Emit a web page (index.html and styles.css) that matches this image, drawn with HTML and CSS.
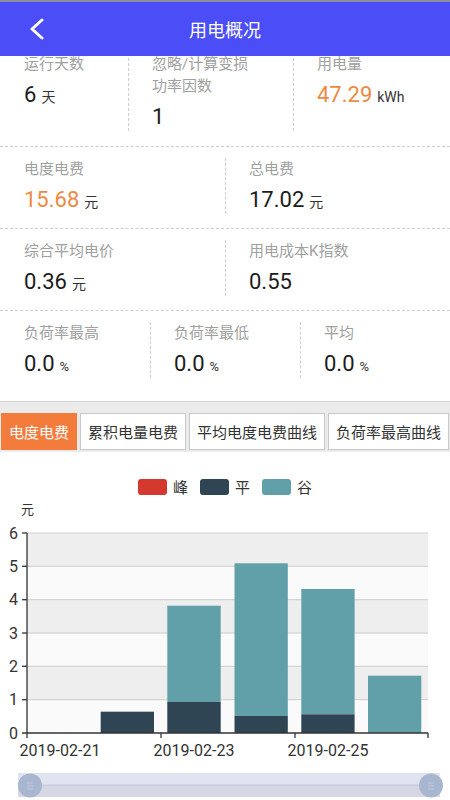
FILE: index.html
```html
<!DOCTYPE html>
<html lang="zh">
<head>
    <meta charset="utf-8">
    <meta name="viewport" content="width=device-width, initial-scale=1">
    <title>用电概况</title>
    <link rel="stylesheet" href="styles.css">
</head>
<body>
<header class="topbar">
    <a class="back" href="#">
        <svg width="16" height="22" viewBox="0 0 16 22"><polyline points="13,2 3,11 13,20" fill="none" stroke="#fff" stroke-width="3" stroke-linecap="round" stroke-linejoin="round"/></svg>
    </a>
    <h1 class="title">用电概况</h1>
    <span></span>
</header>

<main class="page">
    <section class="stats stats-first">
        <div class="stat">
            <div class="stat-label">运行天数</div>
            <div class="stat-value"><span class="num">6</span><span class="unit">天</span></div>
        </div>
        <div class="stat">
            <div class="stat-label two-line">忽略/计算变损<br>功率因数</div>
            <div class="stat-value"><span class="num">1</span></div>
        </div>
        <div class="stat">
            <div class="stat-label">用电量</div>
            <div class="stat-value accent"><span class="num">47.29</span><span class="unit">kWh</span></div>
        </div>
    </section>

    <section class="stats stats-half">
        <div class="stat">
            <div class="stat-label">电度电费</div>
            <div class="stat-value accent"><span class="num">15.68</span><span class="unit">元</span></div>
        </div>
        <div class="stat">
            <div class="stat-label">总电费</div>
            <div class="stat-value"><span class="num">17.02</span><span class="unit">元</span></div>
        </div>
    </section>

    <section class="stats stats-half">
        <div class="stat">
            <div class="stat-label">综合平均电价</div>
            <div class="stat-value"><span class="num">0.36</span><span class="unit">元</span></div>
        </div>
        <div class="stat">
            <div class="stat-label">用电成本K指数</div>
            <div class="stat-value"><span class="num">0.55</span></div>
        </div>
    </section>

    <section class="stats stats-third">
        <div class="stat">
            <div class="stat-label">负荷率最高</div>
            <div class="stat-value"><span class="num">0.0</span><span class="unit pct">%</span></div>
        </div>
        <div class="stat">
            <div class="stat-label">负荷率最低</div>
            <div class="stat-value"><span class="num">0.0</span><span class="unit pct">%</span></div>
        </div>
        <div class="stat">
            <div class="stat-label">平均</div>
            <div class="stat-value"><span class="num">0.0</span><span class="unit pct">%</span></div>
        </div>
    </section>

    <nav class="tabs">
        <div class="tab active">电度电费</div>
        <div class="tab">累积电量电费</div>
        <div class="tab">平均电度电费曲线</div>
        <div class="tab">负荷率最高曲线</div>
    </nav>

    <div class="chart">
        <svg width="450" height="348" viewBox="0 0 450 348">
            <!-- legend -->
            <rect x="138" y="27" width="29" height="16" rx="3" fill="#d4382f"/>
            <text x="173" y="41" class="legend-text">峰</text>
            <rect x="200" y="27" width="29" height="16" rx="3" fill="#2f4554"/>
            <text x="235" y="41" class="legend-text">平</text>
            <rect x="262" y="27" width="29" height="16" rx="3" fill="#61a0a8"/>
            <text x="297" y="41" class="legend-text">谷</text>

            <text x="21" y="62" class="axis-name">元</text>

            <!-- split areas -->
            <rect x="27" y="81" width="401" height="33.3" fill="#eeeeee"/>
            <rect x="27" y="114.3" width="401" height="33.4" fill="#fafafa"/>
            <rect x="27" y="147.7" width="401" height="33.3" fill="#eeeeee"/>
            <rect x="27" y="181" width="401" height="33.3" fill="#fafafa"/>
            <rect x="27" y="214.3" width="401" height="33.4" fill="#eeeeee"/>
            <rect x="27" y="247.7" width="401" height="33.3" fill="#fafafa"/>

            <g stroke="#cccccc" stroke-width="1">
                <line x1="27" y1="81" x2="428" y2="81"/>
                <line x1="27" y1="114.3" x2="428" y2="114.3"/>
                <line x1="27" y1="147.7" x2="428" y2="147.7"/>
                <line x1="27" y1="181" x2="428" y2="181"/>
                <line x1="27" y1="214.3" x2="428" y2="214.3"/>
                <line x1="27" y1="247.7" x2="428" y2="247.7"/>
            </g>

            <!-- bars -->
            <rect x="100.7" y="259.7" width="53.3" height="21.3" fill="#2f4554"/>
            <rect x="167.3" y="153.7" width="53.4" height="96.3" fill="#61a0a8"/>
            <rect x="167.3" y="250" width="53.4" height="31" fill="#2f4554"/>
            <rect x="234.5" y="111.3" width="53.3" height="152.7" fill="#61a0a8"/>
            <rect x="234.5" y="264" width="53.3" height="17" fill="#2f4554"/>
            <rect x="301.3" y="137" width="53.3" height="125.3" fill="#61a0a8"/>
            <rect x="301.3" y="262.3" width="53.3" height="18.7" fill="#2f4554"/>
            <rect x="368" y="223.7" width="53.3" height="57.3" fill="#61a0a8"/>

            <!-- axes -->
            <g stroke="#333" stroke-width="1.3">
                <line x1="27" y1="81" x2="27" y2="281"/>
                <line x1="22" y1="81" x2="27" y2="81"/>
                <line x1="22" y1="114.3" x2="27" y2="114.3"/>
                <line x1="22" y1="147.7" x2="27" y2="147.7"/>
                <line x1="22" y1="181" x2="27" y2="181"/>
                <line x1="22" y1="214.3" x2="27" y2="214.3"/>
                <line x1="22" y1="247.7" x2="27" y2="247.7"/>
                <line x1="22" y1="281" x2="428" y2="281"/>
                <line x1="27" y1="281" x2="27" y2="286"/>
                <line x1="161" y1="281" x2="161" y2="286"/>
                <line x1="295" y1="281" x2="295" y2="286"/>
                <line x1="428" y1="281" x2="428" y2="286"/>
            </g>
            <g class="tick-y">
                <text x="18" y="87">6</text>
                <text x="18" y="120">5</text>
                <text x="18" y="153">4</text>
                <text x="18" y="187">3</text>
                <text x="18" y="220">2</text>
                <text x="18" y="253">1</text>
                <text x="18" y="287">0</text>
            </g>
            <g class="tick-x">
                <text x="60" y="304">2019-02-21</text>
                <text x="194" y="304">2019-02-23</text>
                <text x="328" y="304">2019-02-25</text>
            </g>

            <!-- data zoom -->
            <rect x="18" y="321" width="422" height="12" fill="#e0e4f0"/>
            <rect x="18" y="333" width="422" height="12" fill="#d5d7e5"/>
            <line x1="18" y1="333" x2="440" y2="333" stroke="#c4c7d8"/>
            <circle cx="30" cy="333.5" r="12" fill="#a8b6cf"/>
            <circle cx="431" cy="333.5" r="12" fill="#a8b6cf"/>
            <g stroke="#bfcae0" stroke-width="1">
                <line x1="27" y1="331" x2="33" y2="331"/>
                <line x1="27" y1="334" x2="33" y2="334"/>
                <line x1="27" y1="337" x2="33" y2="337"/>
                <line x1="428" y1="331" x2="434" y2="331"/>
                <line x1="428" y1="334" x2="434" y2="334"/>
                <line x1="428" y1="337" x2="434" y2="337"/>
            </g>
        </svg>
    </div>
</main>
</body>
</html>
```

FILE: styles.css
```css
html, body {
    margin: 0;
    padding: 0;
    background: #fff;
    font-family: Roboto, "Noto Sans CJK SC", sans-serif;
}

.topbar {
    position: fixed;
    top: 0;
    left: 0;
    right: 0;
    z-index: 10;
    height: 54px;
    border-top: 2px solid #8d8d98;
    background: #4b4ef6;
    display: grid;
    grid-template-columns: 1fr auto 1fr;
    align-items: center;
}

.back {
    padding-left: 29px;
    display: flex;
    align-items: center;
}

.title {
    margin: 0;
    font-size: 18px;
    font-weight: normal;
    color: #fff;
}

.page {
    padding-top: 42px;
}

.stats {
    display: grid;
    padding: 11px 0 14px;
    border-bottom: 1px dashed #cfcfcf;
}

.stats-first {
    grid-template-columns: 128px 165px 1fr;
    padding-bottom: 15px;
}

.stats-half {
    grid-template-columns: 1fr 1fr;
}

.stats-third {
    grid-template-columns: repeat(3, 1fr);
    padding-bottom: 23px;
    border-bottom: 1px solid #d4d4d4;
}

.stat {
    padding-left: 24px;
}

.stat + .stat {
    border-left: 1px dashed #cfcfcf;
    padding-left: 23px;
}

.stat-label {
    height: 22px;
    font-size: 15px;
    line-height: 22px;
    color: #a0a0a0;
}

.stat-label.two-line {
    height: 44px;
}

.stat-value {
    height: 28px;
    margin-top: 6px;
    display: flex;
    align-items: baseline;
    gap: 5px;
    font-size: 22px;
    line-height: 28px;
    color: #1c1c1c;
}

.stat-value .unit {
    font-size: 14px;
    line-height: 28px;
    color: #333;
}

.stat-value .pct {
    font-size: 13px;
}

.stat-value.accent .num {
    color: #ee8a3f;
}

.tabs {
    display: flex;
    gap: 3px;
    padding: 11px 1px 2px;
    background: #ebebeb;
}

.tab {
    box-sizing: border-box;
    height: 37px;
    padding: 0 7px;
    display: flex;
    align-items: center;
    white-space: nowrap;
    font-size: 15px;
    color: #333;
    background: #fff;
    border: 1px solid #c8c8c8;
}

.tab.active {
    background: #f37b3b;
    border-color: #f37b3b;
    color: #fff;
}

.chart svg {
    display: block;
}

.legend-text {
    font-size: 15px;
    fill: #333;
}

.axis-name {
    font-size: 13px;
    fill: #333;
}

.tick-y text {
    font-size: 16px;
    fill: #333;
    text-anchor: end;
}

.tick-x text {
    font-size: 16px;
    fill: #333;
    text-anchor: middle;
}
```
